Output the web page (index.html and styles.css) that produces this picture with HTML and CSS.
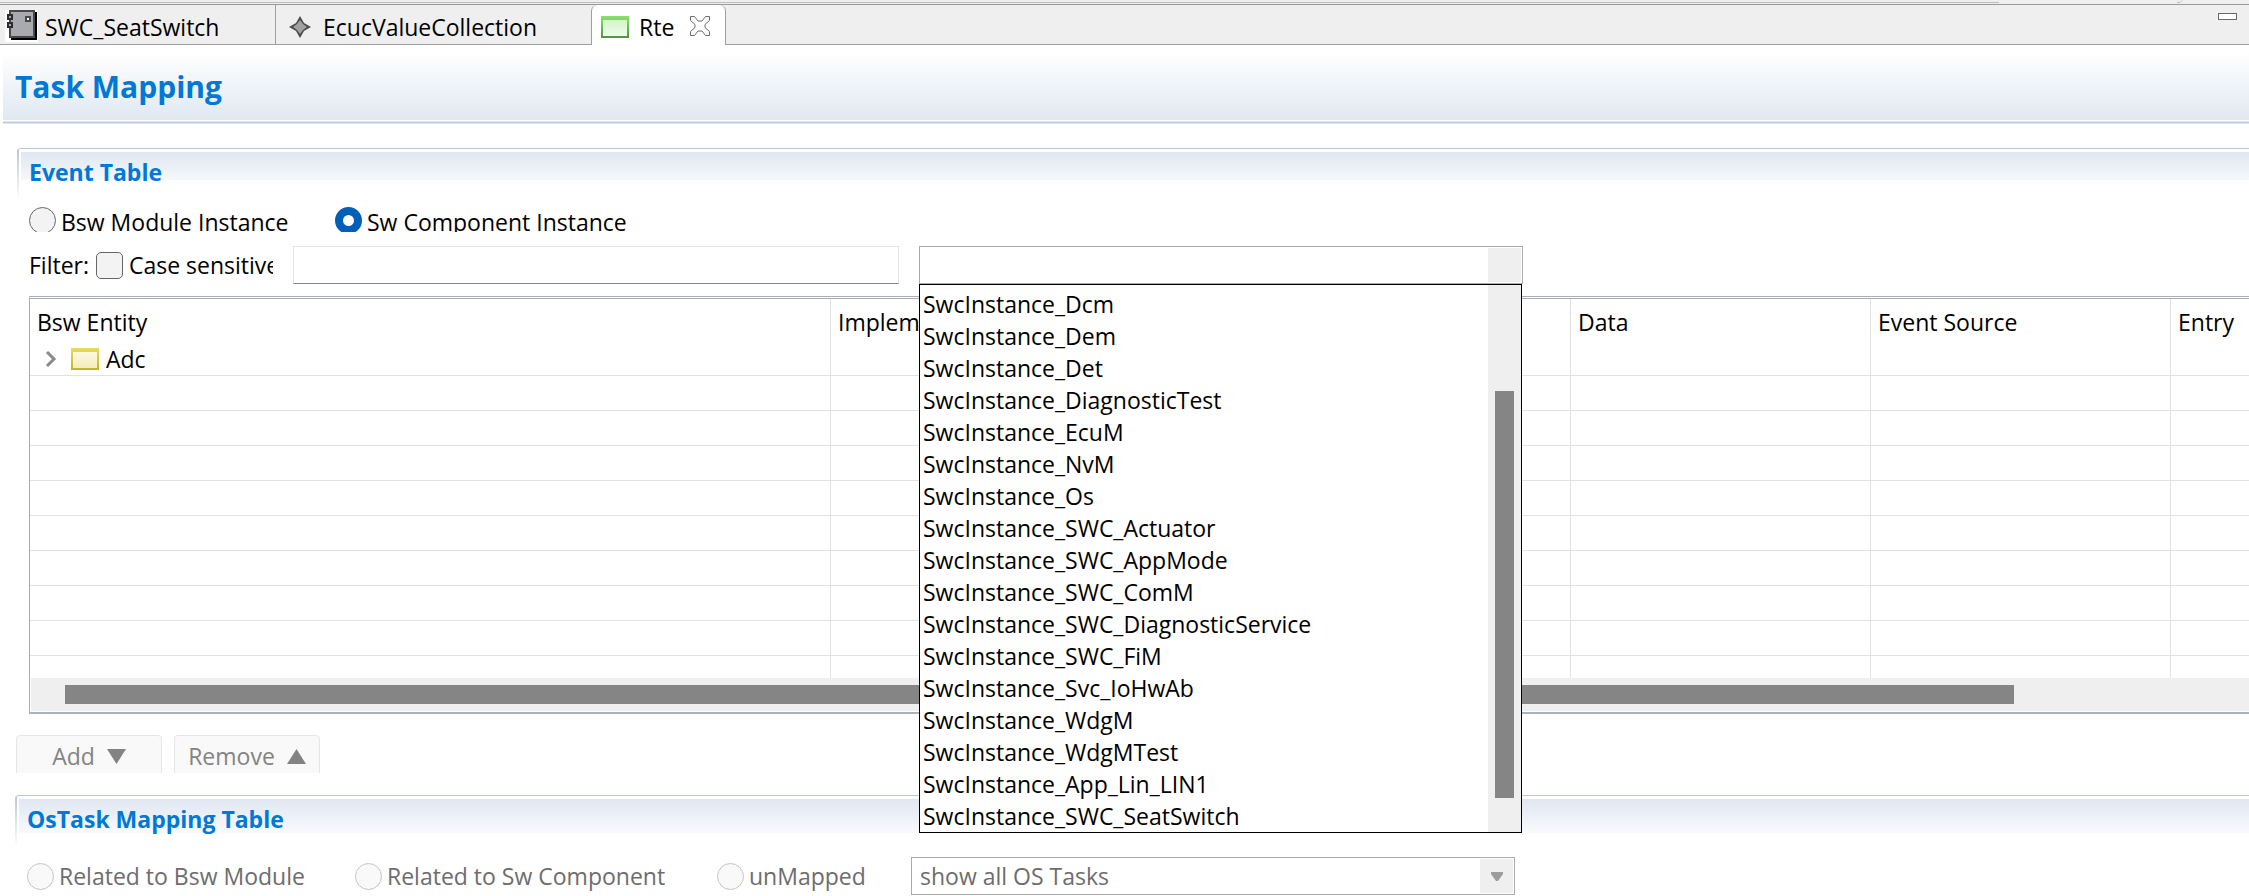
FILE: index.html
```
<!DOCTYPE html>
<html lang="en">
<head>
<meta charset="utf-8">
<title>Task Mapping</title>
<link rel="stylesheet" href="styles.css">
</head>
<body>
<div class="strip">
  <span class="strip-line"></span>
  <svg class="strip-end" viewBox="0 0 250 4"><path d="M178 2.500h3l2-2" fill="none" stroke="#bdbdbd"/></svg>
</div>
<nav class="tabs">
  <button class="tab tab-swc" type="button">
    <svg class="icon-chip" viewBox="0 0 33 32">
      <rect width="33" height="32" fill="#fff"/>
      <path d="M6 2h26v28H6z" fill="#000"/>
      <rect x="5" y="1" width="24" height="26" fill="#a9aab0" stroke="#48484b" stroke-width="2"/>
      <rect x="21" y="7" width="4" height="4" fill="#fff" stroke="#48484b" stroke-width="2"/>
      <rect x="3" y="5" width="4" height="4" fill="#a9aab0" stroke="#2c2c2e" stroke-width="2"/>
      <rect x="3" y="13" width="4" height="4" fill="#a9aab0" stroke="#2c2c2e" stroke-width="2"/>
    </svg>
    <span>SWC_SeatSwitch</span>
  </button>
  <button class="tab tab-ecuc" type="button">
    <svg class="icon-star" viewBox="0 0 22 22">
      <path d="M11 0l4 7 7 4-7 4-4 7-4-7-7-4 7-4z" fill="#4c4c4c"/>
      <path d="M11 4l3 4 4 3-4 3-3 4-3-4-4-3 4-3z" fill="#a2a2a2"/>
    </svg>
    <span>EcucValueCollection</span>
  </button>
  <button class="tab tab-rte" type="button">
    <svg class="icon-box" viewBox="0 0 28 22">
      <defs>
        <linearGradient id="green-edge" x2="0" y2="1"><stop offset="0" stop-color="#8be070"/><stop offset="1" stop-color="#4f9440"/></linearGradient>
        <linearGradient id="green-fill" x2="0" y2="1"><stop offset="0" stop-color="#d3f4c9"/><stop offset="1" stop-color="#f0faed"/></linearGradient>
      </defs>
      <rect width="28" height="22" fill="url(#green-edge)"/>
      <rect x="2" y="4" width="24" height="16" fill="url(#green-fill)"/>
    </svg>
    <span>Rte</span>
    <svg class="icon-close" viewBox="0 0 20 20"><path d="M.5.5h4l3.500 4.500h4l3.500-4.500h4v4l-4.500 4v3l4.500 4v4h-4l-3.500-4.500h-4l-3.500 4.500h-4v-4l4.500-4v-3l-4.500-4z" fill="#fff" stroke="#6b6b6b"/></svg>
  </button>
  <button class="minimize" type="button" aria-label="Minimize"></button>
</nav>

<header class="page-head"><h1>Task Mapping</h1></header>

<main>
  <section class="events">
    <h2 class="section-head">Event Table</h2>
    <div class="kinds">
      <label class="kind kind-bsw"><input class="radio" type="radio" name="kind">Bsw Module Instance</label>
      <label class="kind"><input class="radio" type="radio" name="kind" checked>Sw Component Instance</label>
    </div>
    <div class="filter">
      <label class="filter-label" for="filter-text">Filter:</label>
      <label class="case"><input class="check" type="checkbox">Case sensitive</label>
      <input class="filter-text" id="filter-text" type="text">
      <div class="combo">
        <select aria-label="Instance"><option></option></select>
        <span class="combo-button"></span>
        <div class="popup">
          <ul>
            <li>SwcInstance_Dcm</li>
            <li>SwcInstance_Dem</li>
            <li>SwcInstance_Det</li>
            <li>SwcInstance_DiagnosticTest</li>
            <li>SwcInstance_EcuM</li>
            <li>SwcInstance_NvM</li>
            <li>SwcInstance_Os</li>
            <li>SwcInstance_SWC_Actuator</li>
            <li>SwcInstance_SWC_AppMode</li>
            <li>SwcInstance_SWC_ComM</li>
            <li>SwcInstance_SWC_DiagnosticService</li>
            <li>SwcInstance_SWC_FiM</li>
            <li>SwcInstance_Svc_IoHwAb</li>
            <li>SwcInstance_WdgM</li>
            <li>SwcInstance_WdgMTest</li>
            <li>SwcInstance_App_Lin_LIN1</li>
            <li>SwcInstance_SWC_SeatSwitch</li>
          </ul>
          <div class="popup-track"><div class="popup-thumb"></div></div>
        </div>
      </div>
    </div>
    <div class="grid-frame">
      <table class="grid">
        <colgroup><col class="col-entity"><col class="col-impl"><col class="col-data"><col class="col-data"><col></colgroup>
        <thead><tr><th>Bsw Entity</th><th>Implem</th><th>Data</th><th>Event Source</th><th>Entry</th></tr></thead>
        <tbody>
          <tr>
            <td><div class="entity">
              <svg class="icon-chevron" viewBox="0 0 12 18"><path d="M2 2l7 7-7 7" fill="none" stroke="#8a8a8a" stroke-width="3"/></svg>
              <svg class="icon-box" viewBox="0 0 28 22">
                <defs>
                  <linearGradient id="gold-edge" x2="0" y2="1"><stop offset="0" stop-color="#e9dc5c"/><stop offset="1" stop-color="#c4b325"/></linearGradient>
                  <linearGradient id="gold-fill" x2="0" y2="1"><stop offset="0" stop-color="#fbf9e2"/><stop offset="1" stop-color="#f5edb8"/></linearGradient>
                </defs>
                <rect width="28" height="22" fill="url(#gold-edge)"/>
                <rect x="2" y="4" width="24" height="16" fill="url(#gold-fill)"/>
              </svg>
              <span>Adc</span>
            </div></td><td></td><td></td><td></td><td></td>
          </tr>
          <tr><td></td><td></td><td></td><td></td><td></td></tr>
          <tr><td></td><td></td><td></td><td></td><td></td></tr>
          <tr><td></td><td></td><td></td><td></td><td></td></tr>
          <tr><td></td><td></td><td></td><td></td><td></td></tr>
          <tr><td></td><td></td><td></td><td></td><td></td></tr>
          <tr><td></td><td></td><td></td><td></td><td></td></tr>
          <tr><td></td><td></td><td></td><td></td><td></td></tr>
          <tr><td></td><td></td><td></td><td></td><td></td></tr>
          <tr class="cut"><td></td><td></td><td></td><td></td><td></td></tr>
        </tbody>
      </table>
      <div class="grid-track"><div class="grid-thumb"></div></div>
    </div>
  </section>

  <div class="actions">
    <button class="action" type="button" disabled>Add <svg class="icon-tri" viewBox="0 0 19 15"><path d="M0 0h19l-9.500 15z" fill="#838383"/></svg></button>
    <button class="action" type="button" disabled>Remove <svg class="icon-tri" viewBox="0 0 19 15"><path d="M0 15h19l-9.500-15z" fill="#838383"/></svg></button>
  </div>

  <section class="tasks">
    <h2 class="section-head section-head-tall">OsTask Mapping Table</h2>
    <div class="scope">
      <label class="scope-item scope-bsw"><input class="radio" type="radio" name="scope" disabled>Related to Bsw Module</label>
      <label class="scope-item scope-sw"><input class="radio" type="radio" name="scope" disabled>Related to Sw Component</label>
      <label class="scope-item scope-un"><input class="radio" type="radio" name="scope" disabled>unMapped</label>
      <div class="combo">
        <select aria-label="OS tasks" disabled><option>show all OS Tasks</option></select>
        <span class="combo-button"><svg class="icon-drop" viewBox="0 0 12 9"><path d="M0 0h12v2l-5 7h-2l-5-7z" fill="#9c9c9c"/></svg></span>
      </div>
    </div>
  </section>
</main>
</body>
</html>
```
FILE: styles.css
```
* { box-sizing: border-box; }
body {
  margin: 0;
  background: #fff;
  color: #000;
  font: 23px/32px "Open Sans", "Noto Sans", sans-serif;
  overflow: hidden;
}
button, input, select { font: inherit; color: inherit; margin: 0; padding: 0; }
svg { display: block; flex: none; }
h1, h2, ul { margin: 0; padding: 0; }

.strip { display: flex; height: 5px; background: #efefef; border-bottom: 1px solid #999; }
.strip-line { flex: 1; height: 3px; border-bottom: 1px solid #bdbdbd; }
.strip-end { width: 250px; height: 4px; }

.tabs { display: flex; height: 40px; background: #efefef; border-bottom: 1px solid #a0a0a0; }
.tab {
  display: flex;
  align-items: flex-start;
  background: none;
  border: 0;
  border-right: 1px solid #a0a0a0;
  padding: 5px 0 0;
  line-height: 34px;
  white-space: nowrap;
}
.tab-swc { width: 276px; padding-left: 5px; gap: 7px; }
.tab-ecuc { width: 315px; padding-left: 13px; gap: 12px; border-right: 0; }
.tab-rte {
  height: 40px;
  width: 135px;
  padding-left: 9px;
  background: #fff;
  border-left: 1px solid #a0a0a0;
  border-radius: 6px 6px 0 0;
  gap: 10px;
}
.icon-chip { width: 33px; height: 32px; }
.icon-star { width: 22px; height: 22px; margin-top: 6px; }
.icon-box { width: 28px; height: 22px; }
.tab .icon-box { margin-top: 6px; }
.icon-close { width: 20px; height: 20px; margin: 6px 0 0 6px; }
.minimize {
  width: 19px;
  height: 7px;
  margin: 8px 12px 0 auto;
  background: #fff;
  border: 1px solid #696969;
}

.page-head {
  height: 79px;
  margin-left: 3px;
  padding: 8px 12px 0;
  background:
    linear-gradient(#fff 1px, #dfe7f3 1px, #dfe7f3 2px, #b7c7e5 2px, #b7c7e5 3px, #dfe7f3 3px) 0 100% / 100% 4px no-repeat,
    linear-gradient(#fff 8px, #e0e8f1 75px);
}
h1 { color: #0078d7; font-size: 30px; line-height: 67px; }

.events { margin: 24px 0 0 17px; }
.section-head {
  height: 53px;
  padding-left: 12px;
  border-top: 1px solid #b5c8de;
  border-top-left-radius: 4px;
  background:
    linear-gradient(#b5c8de, #fff) 0 0 / 2px 100% no-repeat,
    linear-gradient(#dfe7f2, #f6f8fb) 4px 3px / 100% 28px no-repeat;
  color: #0078d7;
  font-size: 23px;
  line-height: 46px;
}
.section-head-tall {
  background:
    linear-gradient(#b5c8de, #fff) 0 0 / 2px 100% no-repeat,
    linear-gradient(#dfe7f2, #f9fafd) 4px 3px / 100% 34px no-repeat;
}

.radio, .check {
  appearance: none;
  flex: none;
  width: 27px;
  height: 27px;
  border: 1px solid #666;
  background: #f3f3f3;
}
.radio { border-radius: 50%; }
.radio:checked { border: 8px solid #005fb8; background: #fff; }
.radio:disabled { border-color: #c4c4c4; background: #f9f9f9; }
.check { border-radius: 5px; }

.kinds { display: flex; height: 25px; margin-top: 6px; padding-left: 12px; overflow: hidden; line-height: 30px; }
.kind { display: flex; gap: 5px; }
.kind-bsw { width: 306px; }

.filter { display: flex; align-items: center; margin-top: 14px; padding-left: 12px; white-space: nowrap; }
.filter-label { width: 67px; }
.case { display: flex; align-items: center; gap: 6px; width: 177px; overflow: hidden; }
.filter-text {
  width: 606px;
  height: 38px;
  margin: 0 20px;
  border: 1px solid #e5e5e5;
  border-bottom-color: #868686;
  background: #fff;
}

.combo { position: relative; width: 604px; }
.combo select {
  display: block;
  appearance: none;
  width: 100%;
  height: 38px;
  padding-left: 8px;
  border: 1px solid #a9a9b0;
  border-radius: 0;
  background: #fff;
  opacity: 1;
}
.combo-button {
  position: absolute;
  top: 2px;
  right: 2px;
  bottom: 2px;
  width: 33px;
  display: grid;
  place-items: center;
  background: #efefef;
  pointer-events: none;
}
.icon-drop { width: 12px; height: 9px; }
.popup {
  position: absolute;
  z-index: 2;
  top: 38px;
  left: 0;
  right: 1px;
  display: flex;
  border: 1px solid #000;
  background: #fff;
}
.popup ul { flex: 1; padding: 3px 0 0 3px; list-style: none; }
.popup-track { width: 33px; padding: 106px 7px 34px; background: #efefef; }
.popup-thumb { height: 100%; background: #858585; }

.grid-frame {
  margin: 12px 0 0 12px;
  border-top: 3px double #a8b0ba;
  border-left: 1px solid #a8acb2;
  border-bottom: 2px solid #a8b3bc;
  padding-bottom: 1px;
}
.grid { width: 100%; table-layout: fixed; border-collapse: separate; border-spacing: 0; white-space: nowrap; }
.col-entity { width: 801px; }
.col-impl { width: 740px; }
.col-data { width: 300px; }
.grid th { height: 42px; padding: 4px 0 0 7px; border-right: 1px solid #e2e2e2; font-weight: 400; line-height: 38px; text-align: left; }
.grid td { height: 35px; padding: 0; border-right: 1px solid #e2e2e2; border-bottom: 1px solid #e2e2e2; }
.grid th:last-child, .grid td:last-child { border-right: 0; }
.grid .cut td { height: 22px; border-bottom: 0; }
.entity { display: flex; align-items: center; height: 34px; padding: 2px 0 0 15px; }
.entity span { margin-left: 7px; }
.icon-chevron { width: 12px; height: 18px; margin-right: 14px; }
.grid-track { height: 33px; margin-left: 1px; padding: 7px 235px 7px 34px; background: #efefef; }
.grid-thumb { height: 19px; background: #858585; }

.actions { display: flex; gap: 12px; height: 38px; margin: 21px 0 0 16px; overflow: hidden; }
.action {
  display: flex;
  align-items: center;
  justify-content: center;
  gap: 12px;
  width: 146px;
  height: 42px;
  border: 1px solid #e5e5e5;
  border-radius: 4px;
  background: #f9f9f9;
  color: #838383;
  line-height: 40px;
}
.icon-tri { width: 19px; height: 15px; }

.tasks { margin: 22px 0 0 15px; color: #6d6d6d; }
.scope { display: flex; align-items: center; margin-top: 9px; padding-left: 12px; white-space: nowrap; }
.scope-item { display: flex; align-items: center; gap: 5px; }
.scope-bsw { width: 328px; }
.scope-sw { width: 362px; }
.scope-un { width: 194px; }
```
